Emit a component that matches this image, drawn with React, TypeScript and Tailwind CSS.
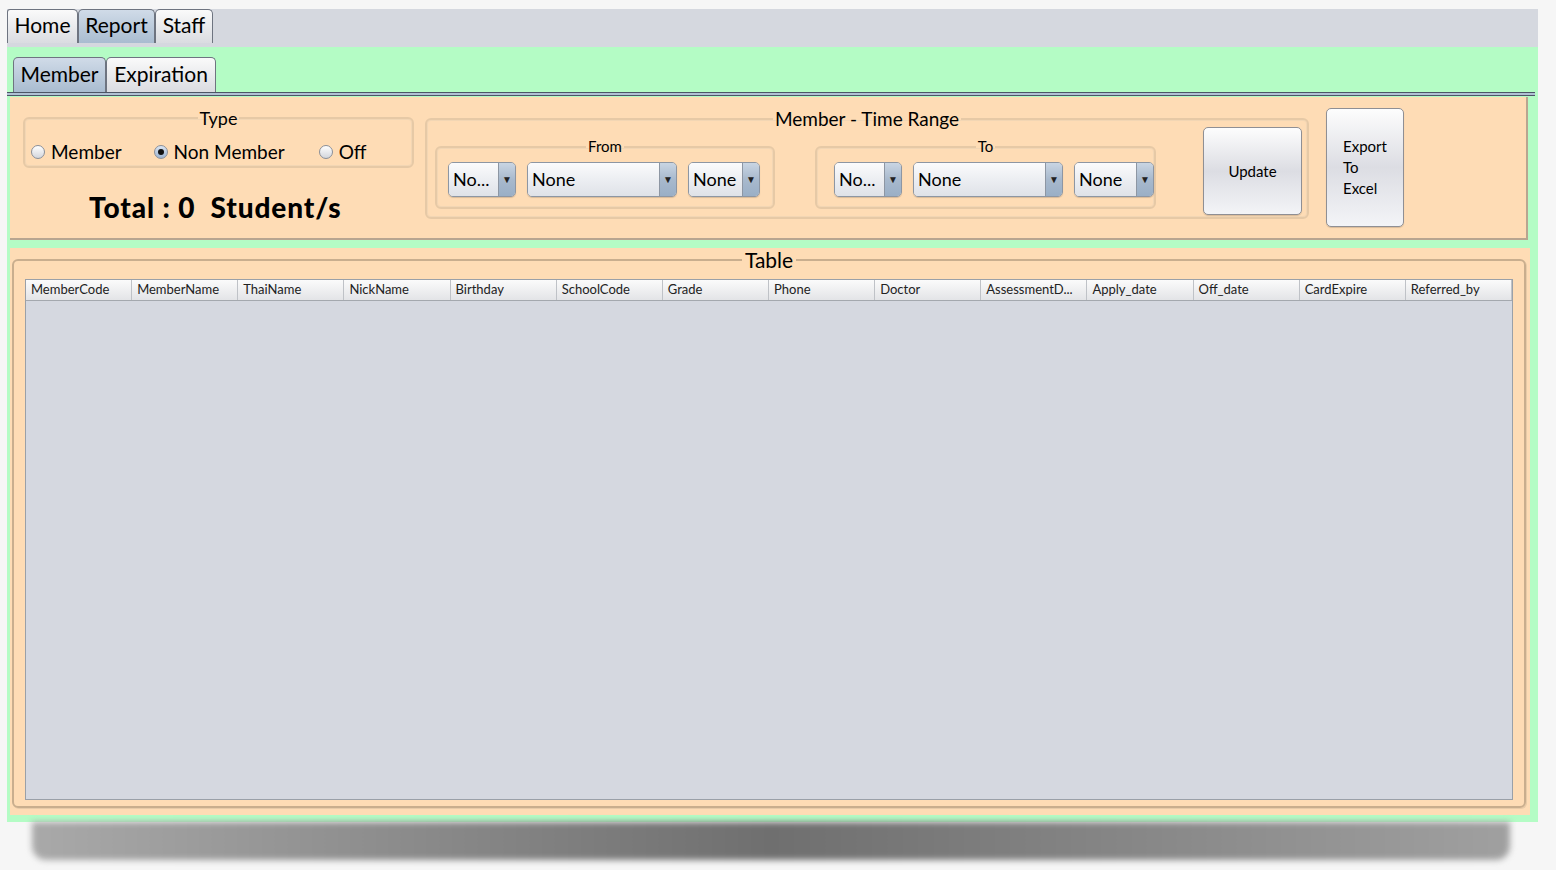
import { ReactNode } from 'react';

const columns = [
  'MemberCode',
  'MemberName',
  'ThaiName',
  'NickName',
  'Birthday',
  'SchoolCode',
  'Grade',
  'Phone',
  'Doctor',
  'AssessmentD...',
  'Apply_date',
  'Off_date',
  'CardExpire',
  'Referred_by',
];

function Group({ title, className, titleClass, children }: { title: string; className: string; titleClass: string; children: ReactNode }) {
  return (
    <fieldset className={`rounded-[6px] border-2 border-[#e6c9a6] shadow-[inset_0_0_0_1px_#f2d6b4] ${className}`}>
      <legend className={`mx-auto px-[2px] leading-none text-black ${titleClass}`}>{title}</legend>
      {children}
    </fieldset>
  );
}

function Radio({ label, checked }: { label: string; checked?: boolean }) {
  return (
    <div className="flex items-center gap-[6px]">
      <div
        className={`flex h-[14px] w-[14px] items-center justify-center rounded-full border border-[#8a8f99] ${
          checked ? 'bg-gradient-to-b from-[#dbe5f2] to-[#9db4d1]' : 'bg-gradient-to-b from-white to-[#d3d6dc]'
        }`}
      >
        {checked && <div className="h-[6px] w-[6px] rounded-full bg-[#111]" />}
      </div>
      <span className="text-[19px] leading-none">{label}</span>
    </div>
  );
}

function Combo({ label, width }: { label: string; width: string }) {
  return (
    <div className={`flex h-[35px] overflow-hidden rounded-[5px] border border-[#8d96a3] shadow-[0_1px_1px_rgba(0,0,0,0.15)] ${width}`}>
      <div className="flex flex-1 items-center bg-gradient-to-b from-[#fbfbfc] via-[#eceef2] to-[#dfe2e8] pl-[4px] text-[18px]">
        {label}
      </div>
      <div className="flex w-[17px] items-center justify-center border-l border-[#8d96a3] bg-gradient-to-b from-[#c9d5e3] via-[#a8b9cd] to-[#9aafc6] text-[10px] text-[#222]">
        ▼
      </div>
    </div>
  );
}

function Tab({ label, active, className }: { label: string; active?: boolean; className: string }) {
  return (
    <div
      className={`flex items-center justify-center rounded-t-[5px] border border-b-0 border-[#6e7480] pb-[4px] text-[21px] leading-none ${
        active ? 'bg-gradient-to-b from-[#d0dbe8] to-[#a9bcd0]' : 'bg-gradient-to-b from-[#fafafa] to-[#dadce1]'
      } ${className}`}
    >
      {label}
    </div>
  );
}

export default function App() {
  return (
    <div className="min-h-[870px] w-[1556px] bg-[#f6f6f6] pl-[7px] pt-[9px] font-['Lato',sans-serif] text-black">
      <div className="flex w-[1531px] flex-col">
        {/* top tabs */}
        <div className="flex h-[38px] items-start bg-[#d5d8df]">
          <div className="flex h-[34px]">
            <Tab label="Home" className="w-[71px] rounded-tl-[3px]" />
            <Tab label="Report" active className="w-[77px]" />
            <Tab label="Staff" className="w-[58px]" />
          </div>
        </div>

        <div className="flex flex-col bg-[#b4fcc5] pb-[7px]">
          {/* sub tabs */}
          <div className="flex h-[45px] items-end pl-[6px]">
            <Tab label="Member" active className="h-[35px] w-[93px]" />
            <Tab label="Expiration" className="h-[35px] w-[110px]" />
          </div>
          <div className="mr-[3px] h-[4px] border-y border-[#4d5566] bg-[#b0c1d4]" />

          {/* filter panel */}
          <div className="ml-[3px] mr-[10px] mt-[1px] flex h-[143px] border-b-2 border-r-2 border-[#b8a590] bg-[#fedcb5] pl-[13px] pt-[12px]">
            <div className="flex w-[391px] flex-col">
              <Group title="Type" className="h-[59px] w-[391px]" titleClass="text-[18px]">
                <div className="flex items-center gap-[29px] pl-[6px] pt-[15px]">
                  <Radio label="Member" />
                  <div className="ml-[3px]">
                    <Radio label="Non Member" checked />
                  </div>
                  <div className="ml-[5px]">
                    <Radio label="Off" />
                  </div>
                </div>
              </Group>
              <div className="mt-[25px] pl-[66px] text-[28px] font-black leading-none tracking-[0.9px]">
                Total : 0&nbsp; Student/s
              </div>
            </div>

            <Group title="Member - Time Range" className="ml-[11px] h-[110px] w-[884px]" titleClass="text-[19px]">
              <div className="flex items-start gap-[40px] pl-[8px] pt-[11px]">
                <Group title="From" className="h-[70px] w-[340px]" titleClass="text-[15px]">
                  <div className="flex items-center gap-[11px] pl-[11px] pt-[8px]">
                    <Combo label="No..." width="w-[68px]" />
                    <Combo label="None" width="w-[150px]" />
                    <Combo label="None" width="w-[72px]" />
                  </div>
                </Group>
                <Group title="To" className="h-[70px] w-[341px]" titleClass="text-[15px]">
                  <div className="flex items-center gap-[11px] pl-[17px] pt-[8px]">
                    <Combo label="No..." width="w-[68px]" />
                    <Combo label="None" width="w-[150px]" />
                    <Combo label="None" width="w-[80px]" />
                  </div>
                </Group>
                <div className="-mt-[12px] ml-[7px] flex h-[88px] w-[99px] items-center justify-center rounded-[5px] border border-[#8f8f94] bg-gradient-to-b from-[#fdfdfd] via-[#dcdde3] to-[#f3f4f7] text-[15px] shadow-[0_1px_1px_rgba(0,0,0,0.15)]">
                  Update
                </div>
              </div>
            </Group>

            <div className="-mt-[1px] ml-[17px] flex h-[119px] w-[78px] flex-col justify-center rounded-[5px] border border-[#8f8f94] bg-gradient-to-b from-[#fdfdfd] via-[#dcdde3] to-[#f3f4f7] pl-[16px] text-[15px] leading-[21px] shadow-[0_1px_1px_rgba(0,0,0,0.15)]">
              <span>Export</span>
              <span>To</span>
              <span>Excel</span>
            </div>
          </div>

          {/* table panel */}
          <div className="ml-[3px] mr-[8px] mt-[8px] flex h-[567px] bg-[#fedcb5] pl-[2px] pr-[4px] pt-[1px] pb-[7px]">
            <fieldset className="flex flex-1 flex-col rounded-[6px] border-2 border-[#c9ae8e] shadow-[1px_1px_0_#e8cba8]">
              <legend className="mx-auto px-[3px] text-[21px] leading-none">Table</legend>
              <div className="ml-[11px] mr-[11px] mt-[9px] mb-[6px] flex flex-1 flex-col border border-[#9aa0a8] bg-[#d5d8e0]">
                <div className="flex h-[21px] border-b border-[#a4a8ae] bg-gradient-to-b from-[#fbfbfb] to-[#e3e4e7]">
                  {columns.map((c) => (
                    <div key={c} className="flex flex-1 items-center overflow-hidden whitespace-nowrap border-r border-[#bfc2c7] pl-[5px] text-[13px] text-[#222]">
                      {c}
                    </div>
                  ))}
                </div>
              </div>
            </fieldset>
          </div>
        </div>

        {/* drop shadow below the window */}
        <div className="ml-[25px] mr-[28px] h-[38px] rounded-b-[14px] bg-gradient-to-r from-[#a9a9a9] via-[#6f6f6f] to-[#a0a0a0] blur-[3px]" />
      </div>
    </div>
  );
}
